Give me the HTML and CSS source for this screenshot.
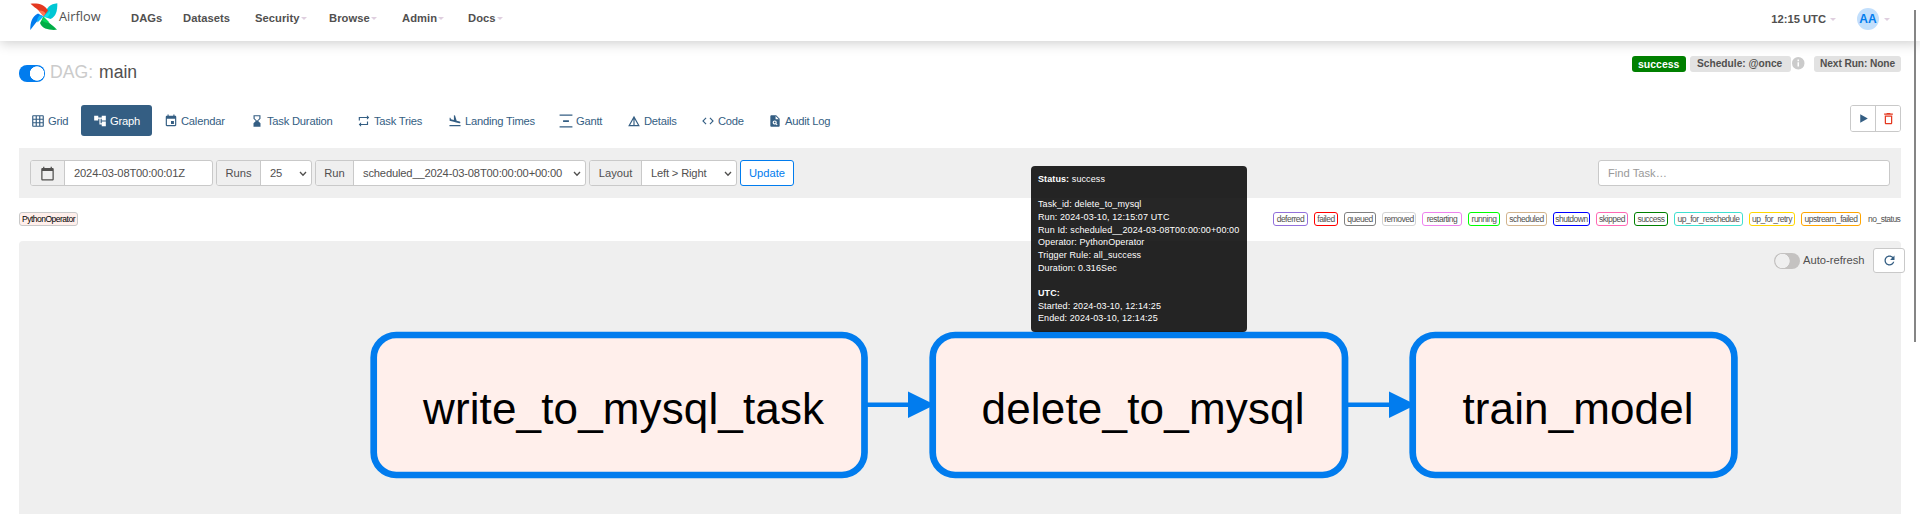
FILE: index.html
```html
<!DOCTYPE html>
<html lang="en">
<head>
<meta charset="utf-8">
<title>main - Graph - Airflow</title>
<link rel="stylesheet" href="styles.css">
</head>
<body>
<header class="navbar">
  <a class="brand">
    <svg class="brand-mark" viewBox="0 0 28 28">
      <path fill="#00c7d4" d="M13.500 13.500C17 4 20 1 27.300 .3C27.500 8 26 13.500 20.500 16L13.500 13.500z"/>
      <path fill="#e43921" d="M.5.800C8 0 14.500 1.500 18 7.500L13.500 13.500C11 8 6 6 .5.800z"/>
      <path fill="#017cee" d="M.3 27C.2 20 2 13 8 10.500L13.500 13.500C8 16 6 20 .3 27z"/>
      <path fill="#00ad46" d="M27 26.800C20 27.500 12 26 10 20L13.500 13.500C16 19 22 21 27 26.800z"/>
      <path fill="#ff7557" d="M13.500 13.500L8.500 7.500C12 7 15 8.500 15.500 10.500z"/>
      <path fill="#11e1ee" d="M13.500 13.500L20 8C20.500 10.500 19 13.500 16.500 14.500z"/>
      <path fill="#04d659" d="M13.500 13.500L19.500 19.500C16 20 13 19 12 17z"/>
      <path fill="#0cb6ff" d="M13.500 13.500L7.500 19.500C6.500 16 8.500 13 10.500 12z"/>
    </svg>
    <span class="brand-name">Airflow</span>
  </a>
  <nav class="menu">
    <a class="m-dags">DAGs</a>
    <a class="m-datasets">Datasets</a>
    <a class="m-security">Security<i class="caret"></i></a>
    <a class="m-browse">Browse<i class="caret"></i></a>
    <a class="m-admin">Admin<i class="caret"></i></a>
    <a class="m-docs">Docs<i class="caret"></i></a>
  </nav>
  <div class="session">
    <span class="clock">12:15 UTC</span><i class="caret"></i>
    <span class="avatar">AA</span><i class="caret"></i>
  </div>
</header>

<main class="page">
  <div class="title-row">
    <h1 class="title"><span class="switch on"></span><span class="muted">DAG:</span><span>main</span></h1>
    <div class="labels">
      <span class="label label-success">success</span>
      <span class="label label-schedule">Schedule: @once</span>
      <svg class="info" viewBox="0 0 24 24"><path d="M12 0a12 12 0 1 0 0 24 12 12 0 0 0 0-24zm1.500 18h-3v-8h3zm0-10h-3V5h3z"/></svg>
      <span class="label label-next">Next Run: None</span>
    </div>
  </div>

  <div class="tab-row">
    <nav class="tabs">
      <a class="tab t-grid"><svg viewBox="0 0 24 24"><path d="M20 2H4c-1.100 0-2 .9-2 2v16c0 1.100.9 2 2 2h16c1.100 0 2-.9 2-2V4c0-1.100-.9-2-2-2zM8 20H4v-4h4v4zm0-6H4v-4h4v4zm0-6H4V4h4v4zm6 12h-4v-4h4v4zm0-6h-4v-4h4v4zm0-6h-4V4h4v4zm6 12h-4v-4h4v4zm0-6h-4v-4h4v4zm0-6h-4V4h4v4z"/></svg>Grid</a>
      <a class="tab t-graph active"><svg viewBox="0 0 24 24"><path d="M22 11V3h-7v3H9V3H2v8h7V8h2v10h4v3h7v-8h-7v3h-2V8h2v3z"/></svg>Graph</a>
      <a class="tab t-calendar"><svg viewBox="0 0 24 24"><path d="M17 12h-5v5h5v-5zM16 1v2H8V1H6v2H5c-1.110 0-1.990.9-1.990 2L3 19c0 1.100.89 2 2 2h14c1.100 0 2-.9 2-2V5c0-1.100-.9-2-2-2h-1V1h-2zm3 18H5V8h14v11z"/></svg>Calendar</a>
      <a class="tab t-duration"><svg viewBox="0 0 24 24"><path d="M18 22l-.01-6L14 12l3.990-4.010L18 2H6v6l4 4-4 3.990V22h12zM8 7.500V4h8v3.500l-4 4-4-4z"/></svg>Task Duration</a>
      <a class="tab t-tries"><svg viewBox="0 0 24 24"><path d="M5 7h12v3l4-4-4-4v3H3v6h2V7zm12 10H7v-3l-4 4 4 4v-3h12v-6h-2v4z"/></svg>Task Tries</a>
      <a class="tab t-landing"><svg viewBox="0 0 24 24"><path d="M2.500 19h19v2h-19zm7.180-5.730l4.350 1.160 5.310 1.420c.8.210 1.620-.26 1.840-1.060.210-.8-.26-1.620-1.060-1.840l-5.310-1.420-2.760-9.020L10.120 2v8.280L5.150 8.950l-.93-2.320-1.450-.39v5.170l1.600.43 5.310 1.430z"/></svg>Landing Times</a>
      <a class="tab t-gantt"><svg viewBox="0 0 24 24"><path d="M23 1v2H1V1h22zM7 10.500v3h10v-3H7zM1 21v2h22v-2H1z"/></svg>Gantt</a>
      <a class="tab t-details"><svg viewBox="0 0 24 24"><path d="M12 3L2 21h20L12 3zm1 5.920L18.600 19H13V8.920zm-2 0V19H5.400L11 8.920z"/></svg>Details</a>
      <a class="tab t-code"><svg viewBox="0 0 24 24"><path d="M9.400 16.600L4.800 12l4.600-4.600L8 6l-6 6 6 6 1.400-1.400zm5.200 0l4.600-4.600-4.600-4.600L16 6l6 6-6 6-1.400-1.400z"/></svg>Code</a>
      <a class="tab t-audit"><svg viewBox="0 0 24 24"><path d="M14 2H6c-1.100 0-1.990.9-1.990 2L4 20c0 1.100.89 2 1.990 2H18c1.100 0 2-.9 2-2V8l-6-6zm1.040 17.450l-1.880-1.880c-1.330.710-3.010.530-4.130-.59-1.370-1.370-1.370-3.580 0-4.950s3.580-1.370 4.950 0c1.120 1.120 1.300 2.800.59 4.130l1.880 1.880-1.410 1.410zM13 9V3.500L18.500 9H13z"/><circle cx="11.500" cy="14.500" r="1.500"/></svg>Audit Log</a>
    </nav>
    <div class="actions">
      <button class="action"><svg viewBox="0 0 24 24"><path d="M6 4v16l14-8z"/></svg></button>
      <button class="action danger"><svg viewBox="0 0 24 24"><path d="M6 19c0 1.100.9 2 2 2h8c1.100 0 2-.9 2-2V7H6v12zM8 9h8v10H8V9zm7.500-5l-1-1h-5l-1 1H5v2h14V4z"/></svg></button>
    </div>
  </div>

  <form class="toolbar">
    <div class="group g-date"><span class="addon"><svg viewBox="0 0 24 24"><path d="M20 3h-1V1h-2v2H7V1H5v2H4c-1.100 0-2 .9-2 2v16c0 1.100.9 2 2 2h16c1.100 0 2-.9 2-2V5c0-1.100-.9-2-2-2zm0 18H4V8h16v13z"/></svg></span><span class="field">2024-03-08T00:00:01Z</span></div>
    <div class="group g-runs"><span class="addon">Runs</span><span class="field select">25<svg viewBox="0 0 8 8"><path d="M1 2l3 3.300L7 2"/></svg></span></div>
    <div class="group g-run"><span class="addon">Run</span><span class="field select">scheduled__2024-03-08T00:00:00+00:00<svg viewBox="0 0 8 8"><path d="M1 2l3 3.300L7 2"/></svg></span></div>
    <div class="group g-layout"><span class="addon">Layout</span><span class="field select">Left &gt; Right<svg viewBox="0 0 8 8"><path d="M1 2l3 3.300L7 2"/></svg></span></div>
    <span class="update">Update</span>
    <span class="search">Find Task…</span>
  </form>

  <div class="legend">
    <span class="key operator">PythonOperator</span>
    <div class="states">
      <span class="key deferred">deferred</span>
      <span class="key failed">failed</span>
      <span class="key queued">queued</span>
      <span class="key removed">removed</span>
      <span class="key restarting">restarting</span>
      <span class="key running">running</span>
      <span class="key scheduled">scheduled</span>
      <span class="key shutdown">shutdown</span>
      <span class="key skipped">skipped</span>
      <span class="key success">success</span>
      <span class="key reschedule">up_for_reschedule</span>
      <span class="key retry">up_for_retry</span>
      <span class="key upstream">upstream_failed</span>
      <span class="key no-status">no_status</span>
    </div>
  </div>

  <section class="canvas">
    <svg class="graph" viewBox="19 241 1882 273">
      <g class="edge">
        <path d="M867 404.700H910M1347 404.700H1391"/>
        <path class="head" d="M908 391.500L935 404.700L908 418zM1389 391.500L1416 404.700L1389 418z"/>
      </g>
      <g class="node">
        <rect x="373.700" y="335" width="490.800" height="140" rx="22.500"/>
        <rect x="932.700" y="335" width="412.300" height="140" rx="22.500"/>
        <rect x="1412.700" y="335" width="321.700" height="140" rx="22.500"/>
      </g>
      <g class="node-name">
        <text x="423" y="424" textLength="401">write_to_mysql_task</text>
        <text x="981.500" y="424" textLength="323">delete_to_mysql</text>
        <text x="1462.500" y="424" textLength="231">train_model</text>
      </g>
    </svg>
    <div class="refresh">
      <span class="switch"></span><span class="refresh-label">Auto-refresh</span>
      <button class="refresh-btn"><svg viewBox="0 0 24 24"><path d="M17.650 6.350C16.200 4.900 14.210 4 12 4c-4.420 0-7.990 3.580-7.990 8s3.570 8 7.990 8c3.730 0 6.840-2.550 7.730-6h-2.080c-.82 2.330-3.040 4-5.650 4-3.310 0-6-2.690-6-6s2.690-6 6-6c1.660 0 3.140.69 4.220 1.780L13 11h7V4l-2.350 2.350z"/></svg></button>
    </div>
  </section>
</main>

<div class="tooltip">
  <p><b>Status:</b> success</p>
  <p>Task_id: delete_to_mysql<br>Run: 2024-03-10, 12:15:07 UTC<br>Run Id: scheduled__2024-03-08T00:00:00+00:00<br>Operator: PythonOperator<br>Trigger Rule: all_success<br>Duration: 0.316Sec</p>
  <p><b>UTC:</b><br>Started: 2024-03-10, 12:14:25<br>Ended: 2024-03-10, 12:14:25</p>
</div>
<div class="scroll-thumb"></div>
</body>
</html>
```
FILE: styles.css
```css
* { box-sizing: border-box; }
body {
  margin: 0;
  height: 514px;
  overflow: hidden;
  background: #fff;
  color: #51504f;
  font: 11.2px/16px "Liberation Sans", Arial, sans-serif;
}
svg { display: block; fill: currentColor; flex: none; }
button { font: inherit; color: inherit; background: #fff; padding: 0; }

/* Top navigation */
.navbar {
  display: flex;
  height: 41px;
  padding-left: 30px;
  box-shadow: 0 2px 12px rgba(0, 0, 0, .2);
  font-weight: bold;
}
.brand { display: flex; width: 101px; padding-top: 3px; }
.brand-mark { width: 28px; height: 28px; }
.brand-name { margin: 5px 0 0 1px; font: 12.8px/16px "Open Sans", sans-serif; }
.menu { display: flex; padding-top: 10px; letter-spacing: .05px; }
.menu a, .session { white-space: nowrap; }
.m-dags { width: 52px; }
.m-datasets { width: 72px; }
.m-security { width: 74px; }
.m-browse { width: 73px; }
.m-admin { width: 66px; }
.caret {
  display: inline-block;
  margin-left: 1px;
  vertical-align: 2px;
  border: solid transparent;
  border-width: 3px 3px 0;
  border-top-color: #dfcfdf;
}
.session { display: flex; align-items: center; height: 22px; margin: 8px 30px 0 auto; }
.session .caret { margin-left: 4px; }
.avatar {
  width: 22px;
  height: 22px;
  margin: 0 1px 0 21px;
  border-radius: 50%;
  background: #c2dffc;
  color: #017cee;
  font-size: 12px;
  line-height: 22px;
  text-align: center;
}

/* Title */
.page { padding: 0 19px; }
.title-row { display: flex; justify-content: space-between; height: 64px; }
.title { display: flex; margin: 22px 0 0; font-size: 17.600px; font-weight: normal; line-height: 18px; }
.muted { width: 49px; margin-left: 5px; color: #cbcbcb; }
.switch {
  display: block;
  width: 26px;
  height: 16px;
  margin-top: 2px;
  border-radius: 8px;
  background: radial-gradient(circle at 8.500px 50%, #efefef 6.800px, #c4c2c1 7.500px);
}
.switch.on { height: 17px; background: radial-gradient(circle at 18px 50%, #fff 6.800px, #017cee 7.500px); }
.labels { display: flex; height: 16px; margin-top: 15px; font-size: 10.2px; font-weight: bold; }
.label { padding-left: 7px; border-radius: 3px; background: #e2e2e2; white-space: nowrap; }
.label-success { width: 54px; margin-right: 4px; padding-left: 6px; background: #008000; color: #fff; font-size: 10.500px; }
.label-schedule { width: 101px; }
.info { width: 12.500px; height: 12.500px; margin: 1px 9.500px 0 1px; color: #cbcbcb; }
.label-next { width: 87px; padding-left: 6px; letter-spacing: -.1px; }

/* View tabs */
.tab-row { display: flex; justify-content: space-between; height: 43px; }
.tabs { display: flex; height: 31px; color: #345e83; letter-spacing: -.22px; }
.tab { display: flex; align-items: center; gap: 3px; padding-left: 12px; border-radius: 3px; white-space: nowrap; }
.tab svg { width: 14px; height: 14px; }
.tab.active { background: #345e83; color: #fff; }
.t-grid { width: 62px; }
.t-graph { width: 71px; }
.t-calendar { width: 86px; }
.t-duration { width: 107px; }
.t-tries { width: 91px; }
.t-landing { width: 111px; }
.t-gantt { width: 68px; }
.t-details { width: 74px; }
.t-code { width: 67px; }
.t-audit { width: 88px; }
.actions { display: flex; width: 51px; height: 27px; border: 1px solid #c9c9c9; border-radius: 3px; overflow: hidden; }
.action { display: grid; flex: 1; place-items: center; border: 0; color: #345e83; }
.action svg { width: 13px; height: 13px; }
.action + .action { border-left: 1px solid #c9c9c9; }
.action.danger { color: #e43921; }
.action.danger svg { width: 15px; height: 15px; }

/* Filters */
.toolbar { display: flex; height: 50px; padding: 12px 11px; background: #efefef; white-space: nowrap; }
.group { display: flex; height: 26px; margin-right: 3px; border: 1px solid #c9c9c9; border-radius: 3px; background: #fff; overflow: hidden; line-height: 25px; }
.addon { display: grid; place-items: center; height: 100%; border-right: 1px solid #c9c9c9; background: #efefef; }
.addon svg { width: 15px; height: 15px; }
.field { display: flex; flex: 1; padding-left: 9px; letter-spacing: -.18px; }
.field svg { width: 8px; height: 8px; margin: 9px 4px 0 auto; fill: none; stroke: currentColor; stroke-width: 1.300; }
.g-date { width: 183px; }
.g-date .addon { width: 34px; }
.g-runs { width: 96px; }
.g-runs .addon { width: 44px; }
.g-run { width: 271px; }
.g-run .addon { width: 38px; }
.g-layout { width: 148px; }
.g-layout .addon { width: 52px; }
.update { width: 54px; height: 26px; border: 1px solid #017cee; border-radius: 3px; background: #fff; color: #017cee; line-height: 25px; text-align: center; }
.search { width: 292px; height: 26px; margin-left: auto; padding-left: 9px; border: 1px solid #c9c9c9; border-radius: 3px; background: #fff; color: #999; line-height: 25px; }

/* Legend */
.legend { display: flex; justify-content: space-between; height: 43px; padding-top: 14px; font-size: 8.500px; letter-spacing: -.5px; line-height: 13px; }
.states { display: flex; gap: 6px; }
.key { height: 14px; border: 1px solid; border-radius: 3px; text-align: center; white-space: nowrap; }
.key:not(.operator) { -webkit-text-fill-color: #51504f; }
.operator { width: 59px; border-color: #c9c9c9; background: #ffefeb; color: #000; }
.deferred { width: 35px; border-color: mediumpurple; }
.failed { width: 24px; border-color: red; }
.queued { width: 32px; border-color: gray; }
.removed { width: 34px; border-color: lightgrey; }
.restarting { width: 40px; border-color: violet; }
.running { width: 32px; border-color: lime; }
.scheduled { width: 41px; border-color: tan; }
.shutdown { width: 37px; border-color: blue; }
.skipped { width: 32px; border-color: hotpink; }
.success { width: 34px; border-color: green; }
.reschedule { width: 69px; border-color: turquoise; }
.retry { width: 46px; border-color: gold; }
.upstream { width: 60px; border-color: orange; }
.no-status { width: 34px; border-color: transparent; }

/* Graph canvas */
.canvas { position: relative; height: 273px; border-radius: 4px 4px 0 0; background: #efefef; }
.graph { width: 1882px; height: 273px; }
.edge { fill: none; stroke: #017cee; stroke-width: 4.500; }
.edge .head { fill: #017cee; stroke: none; }
.node { fill: #ffefeb; stroke: #017cee; stroke-width: 6.700; }
.node-name { fill: #000; font-size: 44px; }
.refresh { position: absolute; top: 7px; right: -4px; display: flex; }
.refresh .switch { margin-top: 5px; }
.refresh-label { width: 70px; margin: 4px 0 0 3px; }
.refresh-btn { display: grid; place-items: center; width: 32px; height: 25px; border: 1px solid #c9c9c9; border-radius: 3px; color: #345e83; }
.refresh-btn svg { width: 15px; height: 15px; }

/* Task tooltip */
.tooltip {
  position: absolute;
  top: 166px;
  left: 1031px;
  width: 216px;
  height: 166px;
  padding: 7px 0 0 7px;
  border-radius: 4px;
  background: rgba(0, 0, 0, .85);
  color: #fff;
  font-size: 9px;
  letter-spacing: .1px;
  line-height: 12.650px;
  white-space: nowrap;
}
.tooltip p { margin: 0 0 12.650px; }

.scroll-thumb { position: absolute; top: 10px; left: 1914px; width: 2px; height: 332px; background: #858585; }
```
